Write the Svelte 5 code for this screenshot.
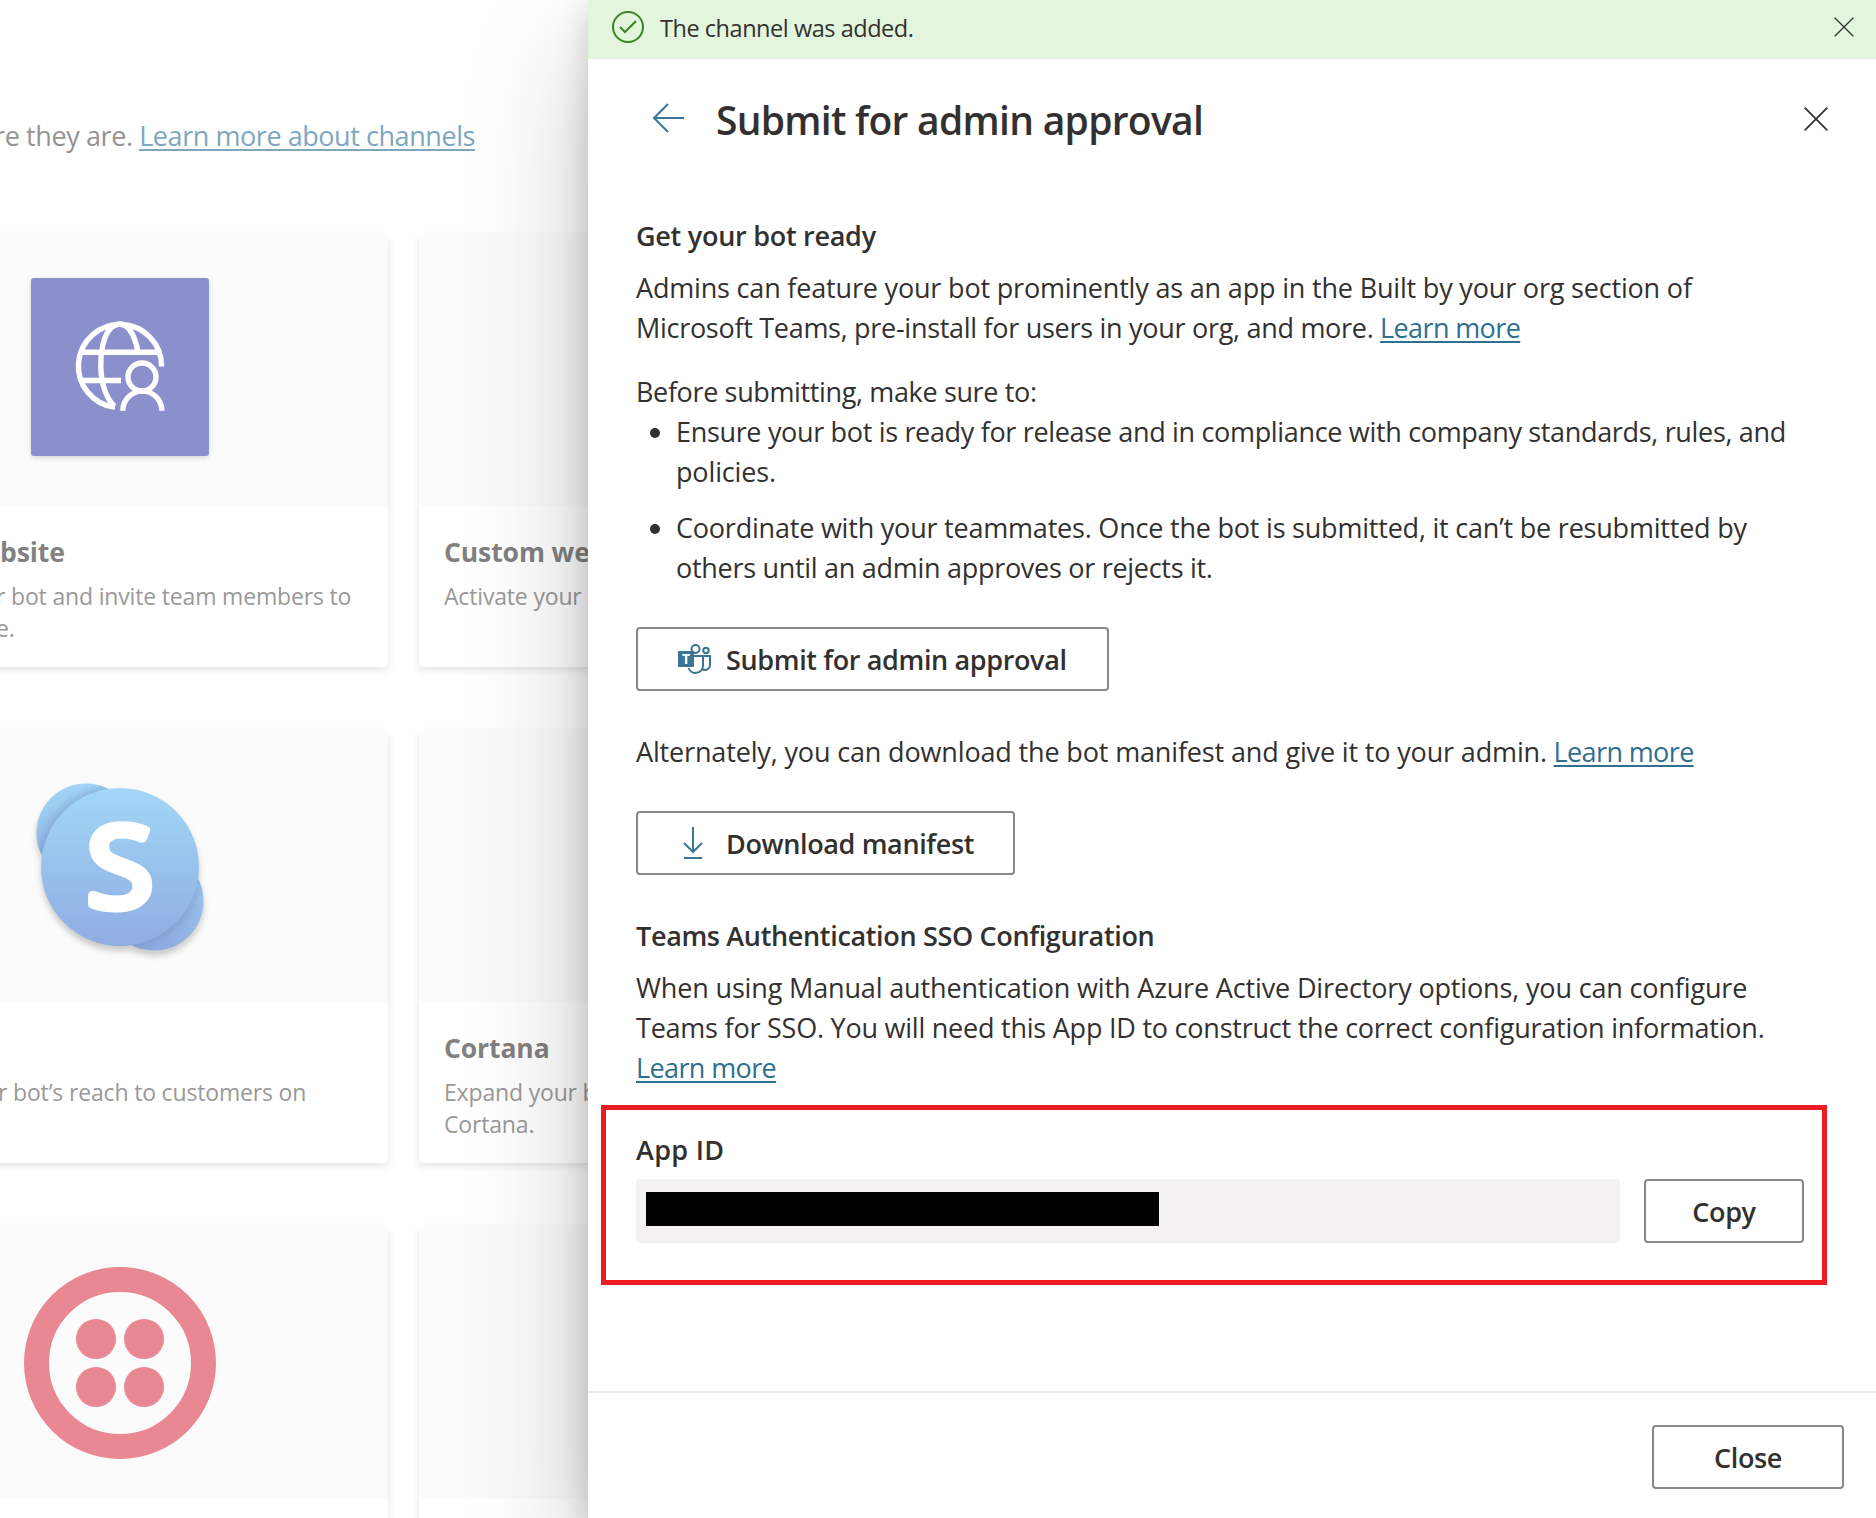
<script>
  const cards = [
    { icon: 'globe', title: 'bsite', lines: ['r bot and invite team members to', 'e.'], cut: 'cut-more' },
    { icon: '', title: 'Custom we', lines: ['Activate your'] },
    { icon: 'skype', title: '', lines: ['r bot’s reach to customers on'], cut: 'cut-less' },
    { icon: '', title: 'Cortana', lines: ['Expand your b', 'Cortana.'] },
    { icon: 'twilio', title: '', lines: [] },
    { icon: '', title: '', lines: [] },
  ];
</script>

<div class="page">
  <main class="channels">
    <p class="intro">re they are. <a href="#channels">Learn more about channels</a></p>
    <div class="cards">
      {#each cards as c}
        <article class="card">
          <div class="art">
            {#if c.icon === 'globe'}
              <div class="tile">
                <svg width="178" height="178" viewBox="0 0 178 178" fill="none" stroke="#fff" stroke-width="5.400">
                  <path d="M84 129.300A41.600 41.600 0 1 1 130.600 88.500" />
                  <path d="M83.500 128C66 113 66 66 79 51Q89 41 98 51Q104 58 107 74M50 74.300H129M50 102.500H90" />
                  <circle cx="111" cy="99" r="14" />
                  <path d="M91.800 132.700A19.500 19.500 0 0 1 130.900 132.700" />
                </svg>
              </div>
            {:else if c.icon === 'skype'}
              <svg class="skype" width="180" height="194" viewBox="0 0 180 194">
                <defs>
                  <linearGradient id="sk" x1="0" y1="0" x2="0" y2="1">
                    <stop offset="0" stop-color="#a2d7f6" /><stop offset="1" stop-color="#8face3" />
                  </linearGradient>
                  <clipPath id="lobes"><circle cx="56" cy="63" r="49.500" /><circle cx="124" cy="131" r="49.500" /></clipPath>
                  <filter id="soft" x="-20%" y="-20%" width="140%" height="140%"><feGaussianBlur stdDeviation="5" /></filter>
                </defs>
                <circle cx="56" cy="63" r="49.500" fill="url(#sk)" />
                <circle cx="124" cy="131" r="49.500" fill="url(#sk)" />
                <g clip-path="url(#lobes)"><circle cx="90" cy="97" r="82" fill="#5a6f9c" opacity="0.350" filter="url(#soft)" /></g>
                <circle cx="90" cy="97" r="79" fill="url(#sk)" />
                <text class="mark" transform="translate(90 136.500) scale(1.080 1)" text-anchor="middle">S</text>
              </svg>
            {:else if c.icon === 'twilio'}
              <svg width="192" height="192" viewBox="0 0 192 192" fill="#e98893">
                <circle cx="96" cy="96" r="83.500" fill="none" stroke="#e98893" stroke-width="25" />
                <circle cx="72" cy="72" r="20" /><circle cx="120" cy="72" r="20" />
                <circle cx="72" cy="120" r="20" /><circle cx="120" cy="120" r="20" />
              </svg>
            {/if}
          </div>
          <div class="body">
            <h3>{c.title}</h3>
            {#each c.lines as line}<p class={c.cut}>{line}</p>{/each}
          </div>
        </article>
      {/each}
    </div>
  </main>

  <aside class="panel">
    <div class="notice">
      <svg width="34" height="34" viewBox="0 0 34 34" fill="none" stroke="#3b8423" stroke-width="2">
        <circle cx="17" cy="17" r="15" /><path d="M9 17l5 5 11-11" />
      </svg>
      <span class="grow">The channel was added.</span>
      <svg width="20" height="20" viewBox="0 0 20 20" stroke="#333" stroke-width="1.300"><path d="M.7.7l18.600 18.600M19.300.7L.7 19.300" /></svg>
    </div>
    <header>
      <svg width="32" height="32" viewBox="0 0 32 32" fill="none" stroke="#3a7593" stroke-width="2"><path d="M32 15H2M16 1L2 15l14 14" /></svg>
      <h1 class="grow">Submit for admin approval</h1>
      <svg width="24" height="24" viewBox="0 0 24 24" stroke="#333" stroke-width="1.800"><path d="M.7.7l22.600 22.600M23.300.7L.7 23.300" /></svg>
    </header>
    <section class="content">
      <h2 class="ready">Get your bot ready</h2>
      <p class="para">
        <span class="t19">Admins can feature your bot prominently as an app in the Built by your org section of</span><br />
        <span class="t29">Microsoft Teams, pre-install for users in your org, and more.</span> <a href="#learn">Learn more</a>
      </p>
      <p class="before">Before submitting, make sure to:</p>
      <ul>
        <li><span class="t33">Ensure your bot is ready for release and in compliance with company standards, rules, and</span><br /><span class="t15">policies.</span></li>
        <li><span class="t21">Coordinate with your teammates. Once the bot is submitted, it can’t be resubmitted by</span><br /><span class="t29">others until an admin approves or rejects it.</span></li>
      </ul>
      <button class="submit">
        <svg width="34" height="30" viewBox="0 0 34 30" fill="none" stroke="#3a7593" stroke-width="2">
          <circle cx="17.500" cy="5" r="4" /><circle cx="28" cy="6.500" r="2.700" />
          <path d="M16 12H25V22a7.500 7.500 0 0 1-14.500 2M25 12h7v9a5 5 0 0 1-7 4.500" />
          <rect x="0" y="7" width="16" height="16" rx="1" fill="#3a7593" stroke="none" />
          <text class="tee" x="8" y="20" text-anchor="middle">T</text>
        </svg>
        Submit for admin approval
      </button>
      <p class="alt"><span class="t15">Alternately, you can download the bot manifest and give it to your admin.</span> <a href="#manifest">Learn more</a></p>
      <button class="download">
        <svg width="20" height="32" viewBox="0 0 20 32" fill="none" stroke="#3a7593" stroke-width="2"><path d="M10 0v25M1 16l9 9 9-9M1 31h18" /></svg>
        Download manifest
      </button>
      <h2 class="sso">Teams Authentication SSO Configuration</h2>
      <p class="para">
        <span class="t15">When using Manual authentication with Azure Active Directory options, you can configure</span><br />
        <span class="t23">Teams for SSO. You will need this App ID to construct the correct configuration information.</span><br />
        <a href="#sso">Learn more</a>
      </p>
      <div class="highlight">
        <div class="label">App ID</div>
        <div class="row">
          <div class="field"><div class="redacted"></div></div>
          <button class="copy">Copy</button>
        </div>
      </div>
    </section>
    <footer><button class="close">Close</button></footer>
  </aside>
</div>

<style>
  .page {
    display: grid;
    grid-template-columns: 588px 1288px;
    height: 1518px;
    overflow: hidden;
    background: #fff;
    color: #323130;
    font-family: "Open Sans", "Noto Sans", sans-serif;
    font-size: 27px;
    line-height: 40px;
    letter-spacing: -0.4px;
    white-space: nowrap;
  }
  h1, h2, h3, p, ul { margin: 0; padding: 0; font-size: inherit; }
  a { color: #2f6f8f; text-decoration: underline; text-decoration-thickness: 2px; text-underline-offset: 3px; letter-spacing: -0.62px; }
  .grow { flex: 1; }
  .t15 { letter-spacing: -0.15px; }
  .t19 { letter-spacing: -0.18px; }
  .t21 { letter-spacing: -0.21px; }
  .t23 { letter-spacing: -0.23px; }
  .t29 { letter-spacing: -0.29px; }
  .t33 { letter-spacing: -0.33px; }
  button {
    display: flex; align-items: center; box-sizing: border-box; height: 64px; padding: 0;
    border: 2px solid #8a8886; border-radius: 4px; background: #fff; color: #323130;
    font: 600 27px "Open Sans", "Noto Sans", sans-serif; letter-spacing: -0.36px;
  }

  .channels { min-width: 0; overflow: hidden; }
  .intro { padding-top: 116px; margin-left: -6px; color: #959492; }
  .intro a { color: #7ea7bd; letter-spacing: -0.44px; }
  .cards { display: grid; grid-template-columns: 428px 388px; grid-auto-rows: 432px; gap: 64px 31px; margin-left: -40px; padding-top: 79px; }
  .card { border-radius: 4px; background: #fff; box-shadow: 0 3px 8px rgba(0, 0, 0, 0.11); }
  .art { display: flex; justify-content: center; align-items: center; box-sizing: border-box; height: 272px; padding: 0 148px 0 40px; border-radius: 4px; background: #fbfbfb; }
  .tile { width: 178px; height: 178px; margin-bottom: 8px; border-radius: 3px; background: #8b90cd; box-shadow: 0 2px 5px rgba(0, 0, 0, 0.15); }
  .tile svg { display: block; }
  .skype { filter: drop-shadow(0 5px 3px rgba(0, 0, 0, 0.2)); }
  .mark { fill: #fff; stroke: #fff; stroke-width: 9px; stroke-linejoin: round; font: 500 112px "Open Sans", sans-serif; letter-spacing: 0; }
  .tee { fill: #fff; stroke: none; font: 700 14px "Open Sans", sans-serif; letter-spacing: 0; }
  .body { padding: 25px 0 0 40px; font-size: 23px; line-height: 32px; letter-spacing: -0.17px; color: #9a9998; }
  .card:nth-child(even) .body { padding-left: 25px; }
  h3 { height: 40px; margin-bottom: 8px; line-height: 40px; font-size: 26.500px; font-weight: 700; letter-spacing: -0.1px; color: #828180; }
  .cut-more { margin-left: -4px; }
  .cut-less { margin-left: -2px; }

  .panel { display: flex; flex-direction: column; position: relative; background: #fff; box-shadow: 0 51px 115px rgba(0, 0, 0, 0.22), 0 10px 29px rgba(0, 0, 0, 0.18); }
  .notice { display: flex; align-items: center; box-sizing: border-box; height: 59px; padding: 0 22px 5px 23px; background: #e3f5dc; gap: 15px; font-size: 23.500px; letter-spacing: -0.46px; }
  .notice span { padding-top: 2px; }
  header { display: flex; align-items: center; height: 120px; padding: 0 48px 0 64px; }
  h1 { padding: 2px 0 0 32px; font-size: 39px; font-weight: 600; letter-spacing: -0.72px; }
  .content { flex: 1; padding: 37px 48px 0; }
  h2 { font-size: 27px; font-weight: 600; letter-spacing: -0.34px; }
  .ready { letter-spacing: -0.27px; }
  .para { padding-top: 12px; }
  .before { padding-top: 24px; letter-spacing: -0.36px; }
  li { margin-left: 40px; }
  ul { display: grid; gap: 16px; }
  .submit { width: 473px; margin-top: 39px; padding-left: 40px; gap: 14px; }
  .alt { padding-top: 41px; }
  .download { width: 379px; margin-top: 39px; padding-left: 45px; gap: 23px; }
  .sso { padding-top: 41px; }
  .highlight { box-sizing: border-box; width: 1226px; height: 180px; margin: 17px 0 0 -35px; padding: 20px 18px 0 30px; border: 5px solid #ed1c24; }
  .label { font-weight: 600; letter-spacing: 0.3px; }
  .row { display: flex; gap: 24px; padding-top: 9px; }
  .field { box-sizing: border-box; width: 984px; height: 64px; padding: 13px 10px; border-radius: 4px; background: #f3f2f1; }
  .redacted { width: 513px; height: 34px; background: #000; }
  .copy { width: 160px; justify-content: center; }
  footer { display: flex; justify-content: flex-end; box-sizing: border-box; height: 127px; padding: 32px 32px 0; border-top: 2px solid #edebe9; }
  .close { width: 192px; justify-content: center; }
</style>
